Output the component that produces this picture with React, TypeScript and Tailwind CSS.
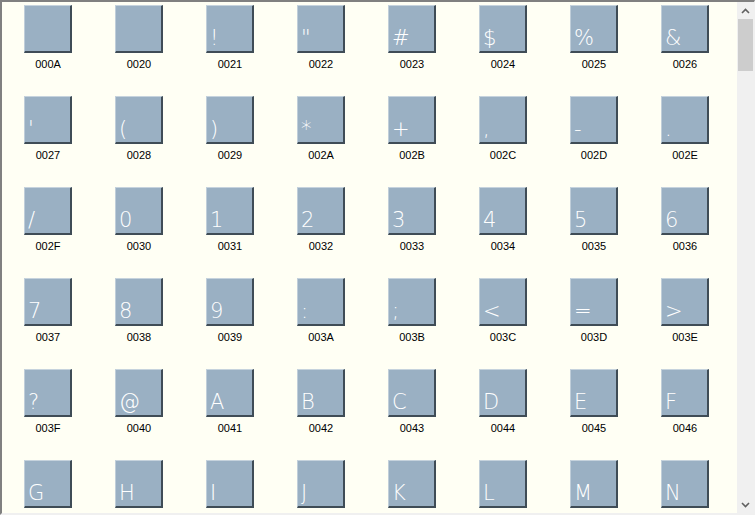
import React from 'react';

// code points shown in the grid, row by row
const codes: number[] = [0x0a];
for (let c = 0x20; c <= 0x4e; c++) codes.push(c);

const hex = (c: number) => c.toString(16).toUpperCase().padStart(4, '0');

function Tile({ code }: { code: number }) {
    const ch = code > 0x20 ? String.fromCharCode(code) : '';
    return (
        <div className="flex w-[91px] flex-col items-start">
            <div className="relative h-[48px] w-[48px] border-t border-l border-t-[#c6d3dd] border-l-[#c0ced9] border-r-2 border-b-2 border-r-[#3f4c56] border-b-[#3f4c56] bg-[#9ab0c3]">
                <span className="absolute bottom-[2px] left-[3px] text-[21px] leading-none font-extralight text-white [font-family:'DejaVu_Sans',sans-serif]">
                    {ch}
                </span>
            </div>
            <div className="mt-[5px] w-[48px] text-center text-[11px] leading-[12px] text-black [font-family:'Liberation_Sans',Arial,sans-serif]">
                {hex(code)}
            </div>
        </div>
    );
}

function Scrollbar() {
    return (
        <div className="flex w-[17px] flex-col bg-[#f0f0f0]">
            <div className="flex h-[17px] items-center justify-center">
                <svg width="9" height="6" viewBox="0 0 9 6">
                    <path d="M1 5 L4.5 1.5 L8 5" fill="none" stroke="#606060" strokeWidth="1.6" />
                </svg>
            </div>
            <div className="mx-[1px] h-[52px] bg-[#cdcdcd]" />
            <div className="flex-1" />
            <div className="flex h-[17px] items-center justify-center">
                <svg width="9" height="6" viewBox="0 0 9 6">
                    <path d="M1 1 L4.5 4.5 L8 1" fill="none" stroke="#606060" strokeWidth="1.6" />
                </svg>
            </div>
        </div>
    );
}

export default function App() {
    return (
        <div className="flex h-[515px] w-[755px] overflow-hidden border-t-2 border-l-2 border-b-2 border-r border-t-[#808080] border-l-[#808080] border-b-[#f0f0f0] border-r-[#f0f0f0] bg-[#fffff4]">
            <div className="flex-1 overflow-hidden">
                <div className="grid grid-cols-[repeat(8,91px)] gap-y-[26px] pt-[3px] pl-[22px]">
                    {codes.map((c) => (
                        <Tile key={c} code={c} />
                    ))}
                </div>
            </div>
            <Scrollbar />
        </div>
    );
}
